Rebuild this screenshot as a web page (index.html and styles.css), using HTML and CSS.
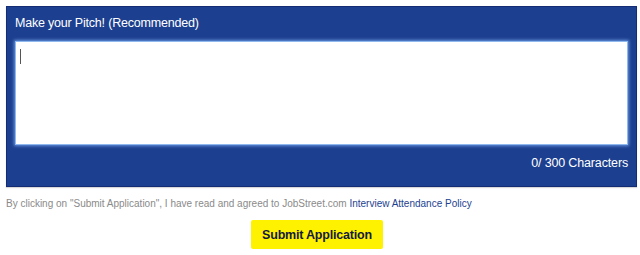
FILE: index.html
```html
<!DOCTYPE html>
<html>
<head>
<meta charset="utf-8">
<link rel="stylesheet" href="styles.css">
</head>
<body>
<div class="page">
  <div class="panel">
    <div class="title">Make your Pitch! (Recommended)</div>
    <div class="box"><span class="caret"></span></div>
    <div class="count">0/ 300 Characters</div>
  </div>
  <p class="terms">By clicking on "Submit Application", I have read and agreed to JobStreet.com <a href="#">Interview Attendance Policy</a></p>
  <div class="actions"><button class="submit">Submit Application</button></div>
</div>
</body>
</html>
```
FILE: styles.css
```css
html, body { margin: 0; padding: 0; background: #fff; }
body { font-family: "Liberation Sans", Arial, sans-serif; }
.page { padding: 6px 3px 0 6px; }
.panel {
  background: #1d3f8f;
  border: 1px solid #132c73;
  padding: 8px 8px 14px 8px;
  color: #fff;
  box-shadow: 0 1px 1px rgba(0,0,0,0.15);
}
.title { font-size: 12.5px; letter-spacing: -0.2px; line-height: 17px; margin-bottom: 9px; }
.box {
  height: 104px;
  background: #fff;
  border: 1px solid #8fb8ef;
  box-shadow: 0 0 3px 1px rgba(120,170,240,0.8);
  padding: 7px 4px;
  box-sizing: border-box;
}
.caret { display: block; width: 1px; height: 15px; background: #555; }
.count { text-align: right; font-size: 12.5px; letter-spacing: -0.15px; line-height: 17px; margin-top: 10px; }
.terms {
  margin: 10px 0 0 0;
  font-size: 10px;
  line-height: 14px;
  color: #8a8a8a;
}
.terms a { color: #1d3f8f; text-decoration: none; }
.actions { display: flex; justify-content: center; margin-top: 9px; padding-right: 9px; }
.submit {
  background: #fff200;
  border: none;
  border-radius: 2px;
  font-family: "Liberation Sans", Arial, sans-serif;
  font-weight: bold;
  font-size: 12.5px;
  letter-spacing: -0.2px;
  color: #141a3c;
  width: 132px;
  height: 29px;
  padding: 0;
}
```
